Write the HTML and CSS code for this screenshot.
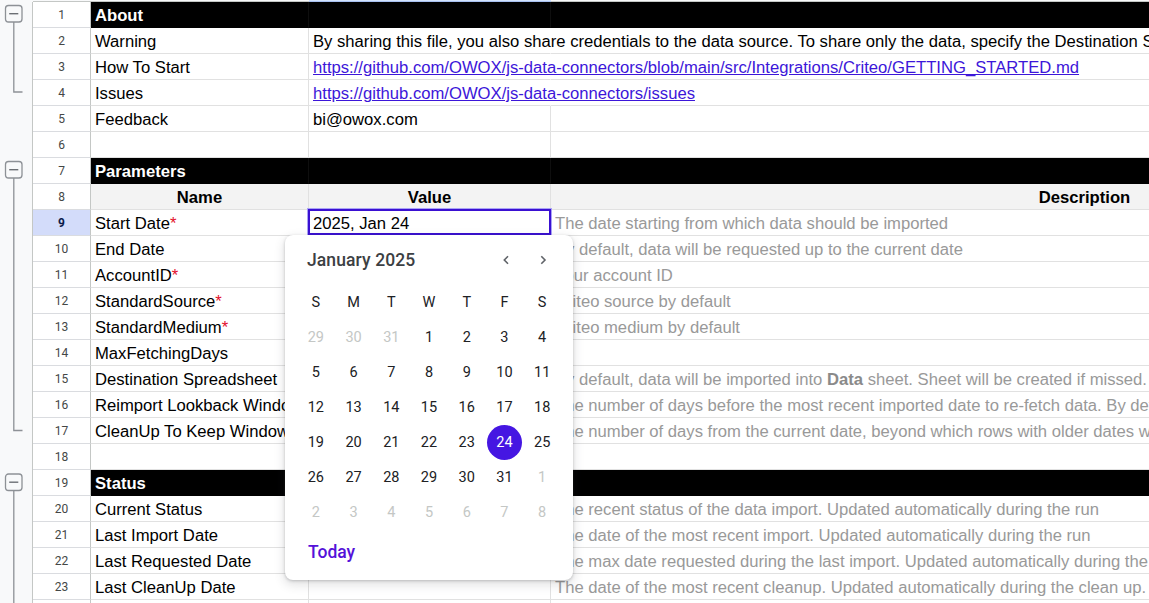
FILE: index.html
```html
<!DOCTYPE html>
<html>
<head>
<meta charset="utf-8">
<link rel="stylesheet" href="styles.css">
</head>
<body>
<div class="sheet">
  <div class="topbar"><div class="tg"></div><div class="th rhw"></div><div class="th aw"></div><div class="th bw selcol"></div><div class="th cw"></div></div>

  <div class="row"><div class="gut"><svg width="32" height="26"><rect class="gbox" x="5.5" y="3.5" width="16.5" height="16.5" rx="3"/><path class="gminus" d="M9.2 11.7H18.3"/><path class="gline" d="M13.8 20V26"/></svg></div><div class="rh">1</div><div class="c a sec">About</div><div class="c b sec"></div><div class="c d sec"></div></div>
  <div class="row"><div class="gut"><svg width="32" height="26"><path class="gline" d="M13.8 0V26"/></svg></div><div class="rh">2</div><div class="c a">Warning</div><div class="c b spill">By sharing this file, you also share credentials to the data source. To share only the data, specify the Destination Spreadsheet parameter.</div><div class="c d"></div></div>
  <div class="row"><div class="gut"><svg width="32" height="26"><path class="gline" d="M13.8 0V26"/></svg></div><div class="rh">3</div><div class="c a">How To Start</div><div class="c b spill"><a class="lnk">https://github.com/OWOX/js-data-connectors/blob/main/src/Integrations/Criteo/GETTING_STARTED.md</a></div><div class="c d"></div></div>
  <div class="row"><div class="gut"><svg width="32" height="26"><path class="gline" d="M13.8 0V12H22.5"/></svg></div><div class="rh">4</div><div class="c a">Issues</div><div class="c b spill"><a class="lnk">https://github.com/OWOX/js-data-connectors/issues</a></div><div class="c d"></div></div>
  <div class="row"><div class="gut"></div><div class="rh">5</div><div class="c a">Feedback</div><div class="c b">bi@owox.com</div><div class="c d"></div></div>
  <div class="row"><div class="gut"></div><div class="rh">6</div><div class="c a"></div><div class="c b"></div><div class="c d"></div></div>

  <div class="row"><div class="gut"><svg width="32" height="26"><rect class="gbox" x="5.5" y="3.5" width="16.5" height="16.5" rx="3"/><path class="gminus" d="M9.2 11.7H18.3"/><path class="gline" d="M13.8 20V26"/></svg></div><div class="rh">7</div><div class="c a sec">Parameters</div><div class="c b sec"></div><div class="c d sec"></div></div>
  <div class="row"><div class="gut"><svg width="32" height="26"><path class="gline" d="M13.8 0V26"/></svg></div><div class="rh">8</div><div class="c a hd">Name</div><div class="c b hd">Value</div><div class="c d hd">Description</div></div>
  <div class="row"><div class="gut"><svg width="32" height="26"><path class="gline" d="M13.8 0V26"/></svg></div><div class="rh rsel">9</div><div class="c a">Start Date<span class="req">*</span></div><div class="c b sel">2025, Jan 24</div><div class="c d ds">The date starting from which data should be imported</div></div>
  <div class="row"><div class="gut"><svg width="32" height="26"><path class="gline" d="M13.8 0V26"/></svg></div><div class="rh">10</div><div class="c a">End Date</div><div class="c b"></div><div class="c d ds">By default, data will be requested up to the current date</div></div>
  <div class="row"><div class="gut"><svg width="32" height="26"><path class="gline" d="M13.8 0V26"/></svg></div><div class="rh">11</div><div class="c a">AccountID<span class="req">*</span></div><div class="c b"></div><div class="c d ds">Your account ID</div></div>
  <div class="row"><div class="gut"><svg width="32" height="26"><path class="gline" d="M13.8 0V26"/></svg></div><div class="rh">12</div><div class="c a">StandardSource<span class="req">*</span></div><div class="c b"></div><div class="c d ds">Criteo source by default</div></div>
  <div class="row"><div class="gut"><svg width="32" height="26"><path class="gline" d="M13.8 0V26"/></svg></div><div class="rh">13</div><div class="c a">StandardMedium<span class="req">*</span></div><div class="c b"></div><div class="c d ds">Criteo medium by default</div></div>
  <div class="row"><div class="gut"><svg width="32" height="26"><path class="gline" d="M13.8 0V26"/></svg></div><div class="rh">14</div><div class="c a">MaxFetchingDays</div><div class="c b"></div><div class="c d ds"></div></div>
  <div class="row"><div class="gut"><svg width="32" height="26"><path class="gline" d="M13.8 0V26"/></svg></div><div class="rh">15</div><div class="c a">Destination Spreadsheet</div><div class="c b"></div><div class="c d ds">By default, data will be imported into <b>Data</b> sheet. Sheet will be created if missed.</div></div>
  <div class="row"><div class="gut"><svg width="32" height="26"><path class="gline" d="M13.8 0V26"/></svg></div><div class="rh">16</div><div class="c a">Reimport Lookback Window</div><div class="c b"></div><div class="c d ds">The number of days before the most recent imported date to re-fetch data. By default, 2 days</div></div>
  <div class="row"><div class="gut"><svg width="32" height="26"><path class="gline" d="M13.8 0V12.5H22.5"/></svg></div><div class="rh">17</div><div class="c a">CleanUp To Keep Window</div><div class="c b"></div><div class="c d ds">The number of days from the current date, beyond which rows with older dates will be deleted</div></div>
  <div class="row"><div class="gut"></div><div class="rh">18</div><div class="c a"></div><div class="c b"></div><div class="c d"></div></div>

  <div class="row"><div class="gut"><svg width="32" height="26"><rect class="gbox" x="5.5" y="4" width="16.5" height="16.5" rx="3"/><path class="gminus" d="M9.2 12.2H18.3"/><path class="gline" d="M13.8 20.5V26"/></svg></div><div class="rh">19</div><div class="c a sec">Status</div><div class="c b sec"></div><div class="c d sec"></div></div>
  <div class="row"><div class="gut"><svg width="32" height="26"><path class="gline" d="M13.8 0V26"/></svg></div><div class="rh">20</div><div class="c a">Current Status</div><div class="c b"></div><div class="c d ds">The recent status of the data import. Updated automatically during the run</div></div>
  <div class="row"><div class="gut"><svg width="32" height="26"><path class="gline" d="M13.8 0V26"/></svg></div><div class="rh">21</div><div class="c a">Last Import Date</div><div class="c b"></div><div class="c d ds">The date of the most recent import. Updated automatically during the run</div></div>
  <div class="row"><div class="gut"><svg width="32" height="26"><path class="gline" d="M13.8 0V26"/></svg></div><div class="rh">22</div><div class="c a">Last Requested Date</div><div class="c b"></div><div class="c d ds">The max date requested during the last import. Updated automatically during the run</div></div>
  <div class="row"><div class="gut"><svg width="32" height="26"><path class="gline" d="M13.8 0V26"/></svg></div><div class="rh">23</div><div class="c a">Last CleanUp Date</div><div class="c b"></div><div class="c d ds">The date of the most recent cleanup. Updated automatically during the clean up.</div></div>
  <div class="row"><div class="gut"><svg width="32" height="26"><path class="gline" d="M13.8 0V26"/></svg></div><div class="rh">24</div><div class="c a"></div><div class="c b"></div><div class="c d"></div></div>

  <div class="picker">
    <div class="ph">
      <div class="ptitle">January 2025</div>
      <div class="pnav">
        <span class="pbtn"><svg width="12" height="12" viewBox="0 0 12 12"><path d="M8 2.2L4.3 6L8 9.8"/></svg></span>
        <span class="pbtn"><svg width="12" height="12" viewBox="0 0 12 12"><path d="M4.3 2.2L8 6L4.3 9.8"/></svg></span>
      </div>
    </div>
    <div class="wk"><span>S</span><span>M</span><span>T</span><span>W</span><span>T</span><span>F</span><span>S</span></div>
    <div class="days">
      <span class="out">29</span><span class="out">30</span><span class="out">31</span><span>1</span><span>2</span><span>3</span><span>4</span>
      <span>5</span><span>6</span><span>7</span><span>8</span><span>9</span><span>10</span><span>11</span>
      <span>12</span><span>13</span><span>14</span><span>15</span><span>16</span><span>17</span><span>18</span>
      <span>19</span><span>20</span><span>21</span><span>22</span><span>23</span><span class="on"><i>24</i></span><span>25</span>
      <span>26</span><span>27</span><span>28</span><span>29</span><span>30</span><span>31</span><span class="out">1</span>
      <span class="out">2</span><span class="out">3</span><span class="out">4</span><span class="out">5</span><span class="out">6</span><span class="out">7</span><span class="out">8</span>
    </div>
    <div class="today">Today</div>
  </div>
</div>
</body>
</html>
```

FILE: styles.css
```css
html, body {
  margin: 0;
  padding: 0;
  width: 1149px;
  height: 603px;
  overflow: hidden;
  background: #fff;
}
body {
  font-family: "Liberation Sans", Arial, sans-serif;
}
.sheet {
  position: relative;
  width: 1619px;
}
.topbar {
  display: flex;
  height: 2px;
}
.tg {
  width: 33px;
  flex: none;
  background: #f8f9fa;
}
.th {
  flex: none;
  height: 1px;
  background: #f8f9fa;
  border-bottom: 1px solid #c4c7c5;
}
.th.selcol {
  background: #d3e3fd;
  border-bottom-color: #a8c0f0;
}
.rhw { width: 58px; }
.aw { width: 218px; }
.bw { width: 242px; }
.cw { width: 1068px; }

.row {
  display: flex;
  height: 26px;
}
.gut {
  width: 33px;
  height: 26px;
  flex: none;
  box-sizing: border-box;
  background: #f8f9fa;
  border-right: 1px solid #c4c7c5;
}
.gut svg {
  display: block;
}
.gbox {
  fill: #f8f9fa;
  stroke: #8d9196;
  stroke-width: 1.3;
}
.gminus {
  stroke: #6b6f74;
  stroke-width: 1.4;
  fill: none;
}
.gline {
  stroke: #8d9196;
  stroke-width: 1.3;
  fill: none;
}
.rh {
  width: 58px;
  flex: none;
  box-sizing: border-box;
  border-right: 1px solid #c4c7c5;
  border-bottom: 1px solid #dadce0;
  display: flex;
  align-items: center;
  justify-content: center;
  font-family: Roboto, "Liberation Sans", sans-serif;
  font-size: 12px;
  color: #444746;
}
.rh.rsel {
  background: #d3dcfa;
  color: #0b1a4a;
  font-weight: 700;
}
.c {
  flex: none;
  box-sizing: border-box;
  height: 26px;
  border-right: 1px solid #e1e1e1;
  border-bottom: 1px solid #e1e1e1;
  padding: 2px 4px 0;
  font-size: 16.65px;
  line-height: 23px;
  white-space: nowrap;
  color: #000;
}
.a { width: 218px; }
.b { width: 242px; }
.d { width: 1068px; overflow: hidden; }
.b.spill {
  border-right-color: transparent;
  overflow: visible;
}
.sec {
  background: #000;
  color: #fff;
  font-weight: 700;
  border-right-color: #0e0e0e;
  border-bottom-color: #000;
}
.hd {
  background: #f3f3f3;
  font-weight: 700;
  text-align: center;
}
.ds {
  color: #999999;
}
.ds b {
  color: #8a8a8a;
}
.req {
  color: #e3102b;
}
.lnk {
  color: #3c16d9;
  text-decoration: underline;
}
.sel {
  position: relative;
}
.sel::after {
  content: "";
  position: absolute;
  left: -1px;
  top: -1px;
  right: -1px;
  bottom: 0;
  border: 2px solid #3a10d2;
  box-shadow: 0 0 0 1px #aaa3f6;
}

.picker {
  position: absolute;
  left: 285px;
  top: 235px;
  width: 288px;
  height: 345px;
  box-sizing: border-box;
  padding: 0 12px 7px;
  background: #fff;
  border-radius: 8px;
  box-shadow: 0 1px 3px rgba(60, 64, 67, 0.28), 0 4px 10px 2px rgba(60, 64, 67, 0.13);
  font-family: Roboto, "Liberation Sans", sans-serif;
  display: flex;
  flex-direction: column;
}
.ph {
  height: 50px;
  flex: none;
  display: flex;
  align-items: center;
  padding-left: 10px;
}
.ptitle {
  font-size: 17.5px;
  font-weight: 500;
  color: #3c4043;
  letter-spacing: 0.1px;
}
.pnav {
  margin-left: auto;
  display: flex;
}
.pbtn {
  width: 37px;
  height: 30px;
  display: flex;
  align-items: center;
  justify-content: center;
}
.pbtn svg path {
  fill: none;
  stroke: #5f6368;
  stroke-width: 1.6;
}
.wk, .days {
  display: grid;
  grid-template-columns: repeat(7, 1fr);
  flex: none;
}
.wk span, .days span {
  height: 35px;
  display: flex;
  align-items: center;
  justify-content: center;
  font-size: 14.5px;
  color: #202124;
}
.days .out {
  color: #c4c7c5;
}
.days .on i {
  font-style: normal;
  width: 35px;
  height: 35px;
  border-radius: 50%;
  background: #4516e2;
  color: #fff;
  display: flex;
  align-items: center;
  justify-content: center;
}
.today {
  height: 43px;
  flex: none;
  display: flex;
  align-items: center;
  padding-left: 11px;
  font-size: 17.5px;
  font-weight: 500;
  color: #5512d9;
}
```
